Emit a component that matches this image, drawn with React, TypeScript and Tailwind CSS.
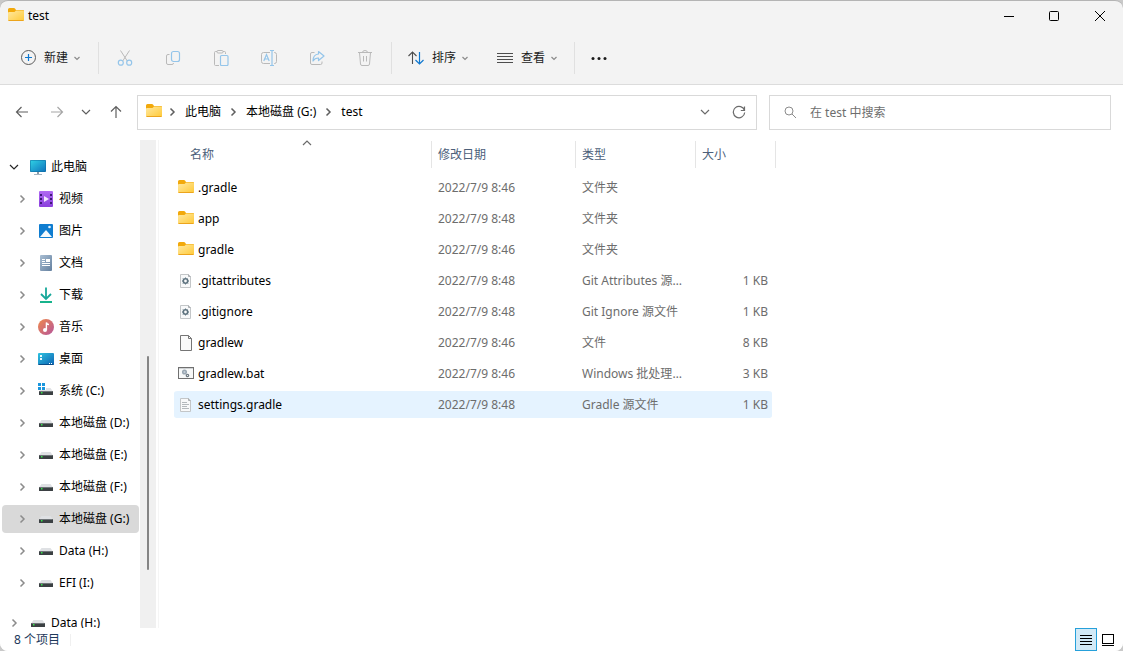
import { useState } from 'react';
import type { ReactNode } from 'react';

type FileKind = 'folder' | 'config' | 'blank' | 'batch' | 'text';

interface FileEntry {
  name: string;
  modified: string;
  type: string;
  size: string;
  kind: FileKind;
}

interface TreeEntry {
  label: string;
  icon: ReactNode;
}

const FolderIcon = () => (
  <svg width="16" height="16" viewBox="0 0 16 16" className="shrink-0">
    <defs>
      <linearGradient id="folder" x1="0" y1="0" x2="1" y2="1">
        <stop offset="0" stopColor="#ffe9a2" />
        <stop offset="1" stopColor="#ffc937" />
      </linearGradient>
    </defs>
    <path d="M0 1.500Q0 0 1.500 0H6Q6.500 0 7 0.600L8 2H15Q16 2 16 3V7H0Z" fill="#f2a90b" />
    <path d="M0 5Q0 4 1 4H6.500L8 2.500H15Q16 2.500 16 3.500V12Q16 13 15 13H1Q0 13 0 12Z" fill="url(#folder)" />
    <path d="M0.500 12.500H15.500" stroke="#eca41c" />
  </svg>
);

const Chevron = ({
  direction = 'right',
  className = 'text-[#8c8c8c]',
}: {
  direction?: 'right' | 'down' | 'up';
  className?: string;
}) => {
  const paths = {
    right: 'M3.500 1.500L7 5L3.500 8.500',
    down: 'M1 3L5 7L9 3',
    up: 'M1 7L5 3L9 7',
  };
  return (
    <svg width="10" height="10" viewBox="0 0 10 10" fill="none" stroke="currentColor" className={className}>
      <path d={paths[direction]} strokeWidth={direction === 'right' ? 1.5 : 1.2} />
    </svg>
  );
};

const SmallChevron = () => (
  <svg width="8" height="8" viewBox="0 0 8 8" fill="none" stroke="#8a8a8a" strokeWidth="1.200">
    <path d="M1.500 3L4 5.500L6.500 3" />
  </svg>
);

const ComputerIcon = () => (
  <svg width="16" height="16" viewBox="0 0 16 16" className="shrink-0">
    <defs>
      <linearGradient id="screen" x1="0" y1="0" x2="1" y2="1">
        <stop offset="0" stopColor="#2fd0e4" />
        <stop offset="1" stopColor="#0f74bd" />
      </linearGradient>
    </defs>
    <rect x="0" y="1" width="16" height="12" rx="1" fill="#0c6a9e" />
    <rect x="0.500" y="1.500" width="15" height="11" rx="0.500" fill="url(#screen)" />
    <path d="M7 13H9V15H7Z" fill="#8a99a5" />
    <path d="M4 15.500H12" stroke="#a5b4c0" />
  </svg>
);

const VideoIcon = () => (
  <svg width="16" height="16" viewBox="0 0 16 16" className="shrink-0">
    <defs>
      <linearGradient id="video" x1="0" y1="0" x2="0" y2="1">
        <stop offset="0" stopColor="#b06af2" />
        <stop offset="1" stopColor="#8a3fdc" />
      </linearGradient>
    </defs>
    <rect x="1" y="0" width="14" height="16" rx="1" fill="url(#video)" />
    <path d="M3 3V14M13 3V14" stroke="#3f1a78" strokeWidth="2" strokeDasharray="2 2" />
    <path d="M6 5L11 8L6 11Z" fill="#f2e7ff" />
  </svg>
);

const PictureIcon = () => (
  <svg width="16" height="16" viewBox="0 0 16 16" className="shrink-0">
    <rect x="1" y="1" width="14" height="14" rx="1" fill="#0f7dd0" />
    <path d="M2 14L7.500 7.500Q8 7 8.500 7.500L14 14Z" fill="#f4f9fd" />
    <circle cx="11.500" cy="4" r="1.300" fill="#e6f4ff" />
  </svg>
);

const DocumentIcon = () => (
  <svg width="16" height="16" viewBox="0 0 16 16" className="shrink-0">
    <defs>
      <linearGradient id="document" x1="0" y1="0" x2="1" y2="1">
        <stop offset="0" stopColor="#a9bed3" />
        <stop offset="1" stopColor="#64809f" />
      </linearGradient>
    </defs>
    <rect x="2" y="0" width="12" height="16" rx="1" fill="url(#document)" />
    <path d="M4 4.500H7M4 6.500H7M4 8.500H12M4 10.500H12" stroke="#fff" />
    <rect x="8" y="4" width="4" height="3" fill="#fff" />
  </svg>
);

const DownloadIcon = () => (
  <svg width="16" height="16" viewBox="0 0 16 16" fill="none" className="shrink-0">
    <path d="M8 0.500V12M3 7L8 12L13 7" stroke="#17a89a" strokeWidth="1.800" />
    <path d="M2 15H14" stroke="#17b38c" strokeWidth="2" />
  </svg>
);

const MusicIcon = () => (
  <svg width="16" height="16" viewBox="0 0 16 16" className="shrink-0">
    <defs>
      <linearGradient id="music" x1="0" y1="0" x2="1" y2="1">
        <stop offset="0" stopColor="#f08a4b" />
        <stop offset="1" stopColor="#b5559c" />
      </linearGradient>
    </defs>
    <circle cx="8" cy="8" r="8" fill="url(#music)" />
    <circle cx="7" cy="11" r="2" fill="#fff" />
    <path d="M8.400 11V3.500Q9 5.500 11 5.500" fill="none" stroke="#fff" strokeWidth="1.400" />
  </svg>
);

const DesktopIcon = () => (
  <svg width="16" height="16" viewBox="0 0 16 16" className="shrink-0">
    <defs>
      <linearGradient id="desktop" x1="0" y1="0" x2="1" y2="1">
        <stop offset="0" stopColor="#2ec3e0" />
        <stop offset="1" stopColor="#0d63b4" />
      </linearGradient>
    </defs>
    <rect x="0" y="2" width="16" height="12" rx="1" fill="url(#desktop)" />
    <path d="M2 4H4V6H2ZM2 7H4V9H2Z" fill="#e8fbff" />
    <path d="M0.500 13.500H15.500" stroke="#0a4c86" />
    <path d="M11 12.500H12M13 12.500H14" stroke="#fff" />
  </svg>
);

const DriveIcon = ({ system = false }: { system?: boolean }) => (
  <svg width="16" height="16" viewBox="0 0 16 16" className="shrink-0">
    <path d="M3.500 5H12.500L15 8.500H1Z" fill="#dfe1e4" />
    <rect x="1" y="8" width="14" height="4" rx="0.500" fill="#3b4043" />
    <path d="M1.500 8.500H14.500" stroke="#6f7578" />
    <rect x="3" y="9" width="1.500" height="1.500" fill="#35e24b" />
    {system && (
      <>
        <path d="M0 0H8V7H0Z" fill="#fff" />
        <path d="M0 0H3V3H0ZM4 0H7V3H4ZM0 4H3V7H0ZM4 4H7V7H4Z" fill="#1a96dd" />
      </>
    )}
  </svg>
);

const FileIcon = ({ kind }: { kind: FileKind }) => {
  if (kind === 'folder') return <FolderIcon />;

  if (kind === 'batch') {
    return (
      <svg width="16" height="16" viewBox="0 0 16 16" fill="none" className="shrink-0">
        <rect x="0.500" y="1.500" width="15" height="11" fill="#f7f8f8" stroke="#707070" />
        <path d="M0 1.500H11M12 1.500H13M14 1.500H16" stroke="#707070" />
        <path d="M1 2.500H15" stroke="#cfd2d4" />
        <circle cx="6.500" cy="6" r="1.800" fill="#c4ced8" stroke="#9aa7b2" strokeWidth="1.500" />
        <circle cx="9.500" cy="9.500" r="1.200" stroke="#6f7a82" strokeWidth="1.200" />
      </svg>
    );
  }

  if (kind === 'blank') {
    return (
      <svg width="16" height="16" viewBox="0 0 16 16" fill="none" className="shrink-0">
        <path d="M2.500 0.500H10.500L13.500 3.500V15.500H2.500Z" fill="#fafafa" stroke="#757575" />
        <path d="M10.500 0.500V3.500H13.500" stroke="#757575" />
      </svg>
    );
  }

  return (
    <svg width="16" height="16" viewBox="0 0 16 16" fill="none" className="shrink-0">
      <path d="M2.500 1.500H10.500L12.500 3.500V14.500H2.500Z" fill="#f8f9fa" stroke="#c3c6c8" />
      <path d="M10.500 1.500V3.500H12.500" stroke="#a9adb0" />
      {kind === 'config' ? (
        <>
          <circle cx="7.500" cy="8" r="2.200" stroke="#5f7480" strokeWidth="1.600" />
          <path
            d="M7.500 4.500V6M7.500 10V11.500M4 8H5M10 8H11M5 5.500L5.700 6.200M10 5.500L9.300 6.200M5 10.500L5.700 9.800M10 10.500L9.300 9.800"
            stroke="#5f7480"
          />
        </>
      ) : (
        <path d="M4 5.500H9M4 7.500H11M4 9.500H9M4 11.500H11" stroke="#b4b9bd" />
      )}
    </svg>
  );
};

const CutIcon = () => (
  <svg width="16" height="16" viewBox="0 0 16 16" fill="none">
    <path d="M3.500 0.500L10.300 11M12.500 0.500L5.700 11" stroke="#b9b9b9" />
    <circle cx="3.800" cy="12.700" r="2.500" stroke="#94c5ea" strokeWidth="1.200" />
    <circle cx="12.200" cy="12.700" r="2.500" stroke="#94c5ea" strokeWidth="1.200" />
  </svg>
);

const CopyIcon = () => (
  <svg width="16" height="16" viewBox="0 0 16 16" fill="none">
    <path d="M4.500 4.500H3Q1.500 4.500 1.500 6V13Q1.500 14.500 3 14.500H7Q8.500 14.500 8.500 13" stroke="#b9b9b9" />
    <rect x="6.500" y="1.500" width="8" height="10" rx="2" stroke="#94c5ea" strokeWidth="1.200" />
  </svg>
);

const PasteIcon = () => (
  <svg width="16" height="16" viewBox="0 0 16 16" fill="none">
    <path d="M4 1.500H2.500Q1.500 1.500 1.500 2.500V14.500Q1.500 15.500 2.500 15.500H6M10 1.500H11.500Q12.500 1.500 12.500 2.500V4" stroke="#b9b9b9" />
    <rect x="4" y="0.500" width="6" height="2.500" rx="1" stroke="#b9b9b9" />
    <rect x="7.500" y="5.500" width="7.500" height="10" rx="1" stroke="#94c5ea" strokeWidth="1.200" />
  </svg>
);

const RenameIcon = () => (
  <svg width="16" height="16" viewBox="0 0 16 16" fill="none">
    <path d="M9 2.500H2.500Q0.500 2.500 0.500 4.500V11.500Q0.500 13.500 2.500 13.500H9M13 2.500H13.500Q15.500 2.500 15.500 4.500V11.500Q15.500 13.500 13.500 13.500H13" stroke="#b9b9b9" />
    <path d="M2.800 11L5.500 4.500L8.200 11M3.700 9H7.300M11 0.500V15.500M9 0.500H13M9 15.500H13" stroke="#94c5ea" strokeWidth="1.200" />
  </svg>
);

const ShareIcon = () => (
  <svg width="16" height="16" viewBox="0 0 16 16" fill="none">
    <path d="M5.500 2.500H3Q1.500 2.500 1.500 4V13Q1.500 14.500 3 14.500H11.500Q13 14.500 13 13V11.500" stroke="#b9b9b9" />
    <path d="M9.500 1.500L15 6L9.500 10.500V8Q6 7.800 4 11Q4 4.500 9.500 4Z" stroke="#94c5ea" strokeWidth="1.200" strokeLinejoin="round" />
  </svg>
);

const TrashIcon = () => (
  <svg width="16" height="16" viewBox="0 0 16 16" fill="none" stroke="#b9b9b9">
    <path d="M1 2.500H15M5.500 2.500Q5.500 0.500 8 0.500Q10.500 0.500 10.500 2.500M2.500 2.500L3.500 14Q3.600 15.500 5 15.500H11Q12.400 15.500 12.500 14L13.500 2.500M6.500 6V11.500M9.500 6V11.500" />
  </svg>
);

const toolButtons = [
  { label: '剪切', icon: <CutIcon /> },
  { label: '复制', icon: <CopyIcon /> },
  { label: '粘贴', icon: <PasteIcon /> },
  { label: '重命名', icon: <RenameIcon /> },
  { label: '共享', icon: <ShareIcon /> },
  { label: '删除', icon: <TrashIcon /> },
];

const tree: TreeEntry[] = [
  { label: '视频', icon: <VideoIcon /> },
  { label: '图片', icon: <PictureIcon /> },
  { label: '文档', icon: <DocumentIcon /> },
  { label: '下载', icon: <DownloadIcon /> },
  { label: '音乐', icon: <MusicIcon /> },
  { label: '桌面', icon: <DesktopIcon /> },
  { label: '系统 (C:)', icon: <DriveIcon system /> },
  { label: '本地磁盘 (D:)', icon: <DriveIcon /> },
  { label: '本地磁盘 (E:)', icon: <DriveIcon /> },
  { label: '本地磁盘 (F:)', icon: <DriveIcon /> },
  { label: '本地磁盘 (G:)', icon: <DriveIcon /> },
  { label: 'Data (H:)', icon: <DriveIcon /> },
  { label: 'EFI (I:)', icon: <DriveIcon /> },
];

const files: FileEntry[] = [
  { name: '.gradle', modified: '2022/7/9 8:46', type: '文件夹', size: '', kind: 'folder' },
  { name: 'app', modified: '2022/7/9 8:48', type: '文件夹', size: '', kind: 'folder' },
  { name: 'gradle', modified: '2022/7/9 8:46', type: '文件夹', size: '', kind: 'folder' },
  { name: '.gitattributes', modified: '2022/7/9 8:48', type: 'Git Attributes 源文件', size: '1 KB', kind: 'config' },
  { name: '.gitignore', modified: '2022/7/9 8:48', type: 'Git Ignore 源文件', size: '1 KB', kind: 'config' },
  { name: 'gradlew', modified: '2022/7/9 8:46', type: '文件', size: '8 KB', kind: 'blank' },
  { name: 'gradlew.bat', modified: '2022/7/9 8:46', type: 'Windows 批处理文件', size: '3 KB', kind: 'batch' },
  { name: 'settings.gradle', modified: '2022/7/9 8:48', type: 'Gradle 源文件', size: '1 KB', kind: 'text' },
];

const TitleBar = () => (
  <header className="flex h-[31px] shrink-0 items-center justify-between pb-0.5 pl-2">
    <div className="flex items-center gap-1">
      <FolderIcon />
      <h1>test</h1>
    </div>
    <div className="flex h-full">
      <button aria-label="最小化" className="flex w-11 items-center justify-center">
        <svg width="10" height="10" viewBox="0 0 10 10" stroke="#000">
          <path d="M0 5.500H10" />
        </svg>
      </button>
      <button aria-label="最大化" className="flex w-[46px] items-center justify-center">
        <svg width="10" height="10" viewBox="0 0 10 10" fill="none" stroke="#000">
          <rect x="0.500" y="0.500" width="9" height="9" rx="1" />
        </svg>
      </button>
      <button aria-label="关闭" className="flex w-[46px] items-center justify-center">
        <svg width="10" height="10" viewBox="0 0 10 10" stroke="#000">
          <path d="M0 0L10 10M10 0L0 10" />
        </svg>
      </button>
    </div>
  </header>
);

const Separator = () => <div className="h-8 w-px shrink-0 bg-[#e0e0e0]" />;

const Toolbar = () => (
  <div className="flex h-[53px] shrink-0 items-center border-b border-[#dcdcdc] pl-5 text-[#1a1a1a]">
    <button className="mr-[17px] flex items-center gap-2">
      <svg width="16" height="16" viewBox="0 0 16 16" fill="none">
        <circle cx="8.500" cy="7.500" r="7" stroke="#5c5c5c" />
        <path d="M8.500 4V11M5 7.500H12" stroke="#0f78d0" strokeWidth="1.200" />
      </svg>
      <span className="flex items-center gap-[5px]">
        新建
        <SmallChevron />
      </span>
    </button>
    <Separator />
    <div className="mx-0.5 flex">
      {toolButtons.map((tool) => (
        <button key={tool.label} aria-label={tool.label} disabled className="flex h-8 w-12 items-center justify-center">
          {tool.icon}
        </button>
      ))}
    </div>
    <Separator />
    <button className="ml-4 flex items-center gap-2">
      <svg width="16" height="16" viewBox="0 0 16 16" fill="none">
        <path d="M4.500 14V2M0.500 6L4.500 2L8.500 6" stroke="#4d4d4d" strokeWidth="1.100" />
        <path d="M11.500 2V14M7.500 10L11.500 14L15.500 10" stroke="#0f78d0" strokeWidth="1.200" />
      </svg>
      <span className="flex items-center gap-[5px]">
        排序
        <SmallChevron />
      </span>
    </button>
    <button className="mr-4 ml-7 flex items-center gap-2">
      <svg width="16" height="16" viewBox="0 0 16 16" stroke="#4d4d4d">
        <path d="M0 3.500H16M0 6.500H16M0 9.500H16M0 12.500H16" />
      </svg>
      <span className="flex items-center gap-[5px]">
        查看
        <SmallChevron />
      </span>
    </button>
    <Separator />
    <button aria-label="查看更多" className="ml-4">
      <svg width="16" height="16" viewBox="0 0 16 16" fill="#1a1a1a">
        <circle cx="2" cy="8.500" r="1.500" />
        <circle cx="8" cy="8.500" r="1.500" />
        <circle cx="14" cy="8.500" r="1.500" />
      </svg>
    </button>
  </div>
);

const AddressBar = () => (
  <div className="flex shrink-0 items-center bg-white py-2.5 pr-3 pl-1">
    <div className="mr-[3px] flex pb-0.5">
      <button aria-label="后退" className="flex h-8 w-[35px] items-center justify-center">
        <svg width="14" height="14" viewBox="0 0 14 14" fill="none" stroke="#5f5f5f" strokeWidth="1.200">
          <path d="M13 7H1.500M6.500 2L1.500 7L6.500 12" />
        </svg>
      </button>
      <button aria-label="前进" className="flex h-8 w-[35px] items-center justify-center">
        <svg width="14" height="14" viewBox="0 0 14 14" fill="none" stroke="#a6a6a6" strokeWidth="1.200">
          <path d="M1 7H12.500M7.500 2L12.500 7L7.500 12" />
        </svg>
      </button>
      <button aria-label="最近浏览的位置" className="flex h-8 w-6 items-center justify-center">
        <Chevron direction="down" className="text-[#5f5f5f]" />
      </button>
      <button aria-label="向上" className="flex h-8 w-9 items-center justify-center">
        <svg width="14" height="14" viewBox="0 0 14 14" fill="none" stroke="#5f5f5f" strokeWidth="1.200">
          <path d="M7 13V1.500M2 6.500L7 1.500L12 6.500" />
        </svg>
      </button>
    </div>
    <div className="flex h-[35px] min-w-0 flex-1 items-center border border-[#d9d9d9] pb-0.5 pl-2">
      <FolderIcon />
      {['此电脑', '本地磁盘 (G:)', 'test'].map((crumb) => (
        <div key={crumb} className="flex items-center pr-0.5">
          <span className="flex w-[23px] justify-center pr-1">
            <Chevron className="text-[#5f5f5f]" />
          </span>
          <button className="whitespace-nowrap">{crumb}</button>
        </div>
      ))}
      <button aria-label="以前的位置" className="ml-auto flex w-[34px] justify-center">
        <Chevron direction="down" className="text-[#6b6b6b]" />
      </button>
      <button aria-label="刷新" className="flex w-[34px] justify-center">
        <svg width="14" height="14" viewBox="0 0 14 14" fill="none" stroke="#6b6b6b" strokeWidth="1.200">
          <path d="M12.500 5.500A5.700 5.700 0 1 0 12.700 7.500M12.500 1.500V5.500H8.800" />
        </svg>
      </button>
    </div>
    <label className="ml-3 flex h-[35px] w-[342px] items-center gap-3 border border-[#d9d9d9] px-3.5">
      <svg width="14" height="14" viewBox="0 0 14 14" fill="none" stroke="#8c8c8c" className="shrink-0">
        <circle cx="5" cy="5" r="4" />
        <path d="M8 8L12 12" />
      </svg>
      <input
        type="search"
        aria-label="搜索"
        placeholder="在 test 中搜索"
        className="min-w-0 flex-1 outline-none placeholder:text-[#6d6d6d]"
      />
    </label>
  </div>
);

const Sidebar = () => {
  const [selected, setSelected] = useState('本地磁盘 (G:)');

  return (
    <nav className="flex w-[140px] shrink-0 flex-col gap-1 overflow-hidden pt-[13px] pr-px pl-0.5">
      <button className="flex h-7 shrink-0 items-center pl-1">
        <span className="mr-2 flex w-4 justify-center">
          <Chevron direction="down" className="text-[#262626]" />
        </span>
        <ComputerIcon />
        <span className="ml-[5px]">此电脑</span>
      </button>
      {tree.map((entry) => (
        <button
          key={entry.label}
          onClick={() => setSelected(entry.label)}
          className={`flex h-7 shrink-0 items-center rounded-sm pl-3 ${
            selected === entry.label ? 'bg-[#d9d9d9]' : ''
          }`}
        >
          <span className="mr-2 flex w-4 justify-center">
            <Chevron />
          </span>
          {entry.icon}
          <span className="ml-[5px] whitespace-nowrap">{entry.label}</span>
        </button>
      ))}
      <button className="mt-2 flex h-7 shrink-0 items-center pl-1">
        <span className="mr-2 flex w-4 justify-center">
          <Chevron />
        </span>
        <DriveIcon />
        <span className="ml-[5px] leading-3">Data (H:)</span>
      </button>
    </nav>
  );
};

const HeaderCell = ({ children }: { children: ReactNode }) => (
  <div className="h-[27px] border-r border-[#e5e5e5] pl-1.5 leading-[27px]">{children}</div>
);

const FileTable = () => (
  <table className="w-[602px] table-fixed border-separate border-spacing-0 text-left text-[#6d6d6d]">
    <colgroup>
      <col className="w-[258px]" />
      <col className="w-[144px]" />
      <col className="w-[120px]" />
      <col className="w-[76px]" />
      <col className="w-1" />
    </colgroup>
    <thead className="text-[#4c607a]">
      <tr className="h-[31px] align-top">
        <th scope="col" aria-sort="ascending" className="p-0 font-normal">
          <div className="relative h-[27px] border-r border-[#e5e5e5] pl-4 leading-[27px]">
            名称
            <span className="absolute -top-[3px] left-32">
              <Chevron direction="up" className="text-[#6b6b6b]" />
            </span>
          </div>
        </th>
        <th scope="col" className="p-0 font-normal">
          <HeaderCell>修改日期</HeaderCell>
        </th>
        <th scope="col" className="p-0 font-normal">
          <HeaderCell>类型</HeaderCell>
        </th>
        <th scope="col" colSpan={2} className="p-0 font-normal">
          <HeaderCell>大小</HeaderCell>
        </th>
      </tr>
    </thead>
    <tbody>
      {files.map((file) => {
        const cell = `border-y-2 border-transparent bg-clip-padding py-0 ${
          file.name === 'settings.gradle' ? 'bg-[#e5f3ff]' : ''
        }`;
        return (
          <tr key={file.name} className="h-[31px]">
            <td className={`${cell} rounded-l-sm pr-2 pl-1 text-black`}>
              <div className="flex items-center gap-1">
                <FileIcon kind={file.kind} />
                {file.name}
              </div>
            </td>
            <td className={`${cell} px-1.5`}>{file.modified}</td>
            <td className={`${cell} truncate pr-3 pl-1.5`}>{file.type}</td>
            <td className={`${cell} rounded-r-sm pr-1 text-right`}>{file.size}</td>
          </tr>
        );
      })}
    </tbody>
  </table>
);

const StatusBar = () => (
  <footer className="flex h-[23px] shrink-0 items-center justify-between pr-1 pl-3.5 text-[#1e395b]">
    <span className="border-r border-[#f0f0f0] pr-2.5 leading-3">8 个项目</span>
    <div className="flex">
      <button
        aria-label="详细信息"
        aria-pressed="true"
        className="flex h-[23px] w-[22px] items-center justify-center border border-[#26a0da] bg-[#d3eaf7]"
      >
        <svg width="12" height="12" viewBox="0 0 12 12" stroke="#000">
          <path d="M0 1.500H12M0 4.500H12M0 7.500H12M0 10.500H12" />
        </svg>
      </button>
      <button aria-label="大缩略图" className="flex h-[23px] w-[22px] items-center justify-center">
        <svg width="12" height="12" viewBox="0 0 12 12" fill="none" stroke="#000">
          <rect x="0.500" y="0.500" width="11" height="9" />
          <path d="M0 11.500H12" />
        </svg>
      </button>
    </div>
  </footer>
);

const App = () => {
  return (
    <div className="h-screen bg-[#c9c9c9]">
      <div className="flex h-full flex-col overflow-hidden rounded-lg border-t border-[#b4b4b4] bg-[#f3f3f3] font-['Noto_Sans','Noto_Sans_CJK_SC',sans-serif] text-xs text-black">
        <TitleBar />
        <Toolbar />
        <AddressBar />
        <main className="flex min-h-0 flex-1 bg-white">
          <Sidebar />
          <div className="w-4 shrink-0 bg-[#f0f0f0] pt-[216px] pl-[7px]">
            <div className="h-[214px] w-0.5 rounded-full bg-[#858585]" />
          </div>
          <section className="ml-0.5 min-w-0 flex-1 overflow-hidden border-l border-[#f5f5f5] pt-px pl-[15px]">
            <FileTable />
          </section>
        </main>
        <div className="shrink-0 bg-white">
          <StatusBar />
        </div>
      </div>
    </div>
  );
};

export default App;
